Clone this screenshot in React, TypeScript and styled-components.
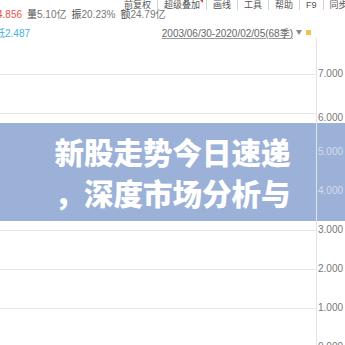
import React from "react";
import styled, { createGlobalStyle } from "styled-components";

const Global = createGlobalStyle`
  html, body { margin: 0; padding: 0; background: #ffffff; }
  body {
    font-family: "Liberation Sans", "Noto Sans CJK SC", sans-serif;
    overflow: hidden;
  }
`;

const Page = styled.div`
  width: 345px;
  height: 345px;
  overflow: hidden;
  position: relative;
  background: #ffffff;
  display: flex;
  flex-direction: column;
`;

const Toolbar = styled.div`
  display: flex;
  align-items: center;
  height: 10px;
  padding-left: 118px;
  white-space: nowrap;
  font-size: 9px;
  color: #555;
  flex-shrink: 0;
`;

const ToolItem = styled.span<{ $mark?: boolean }>`
  position: relative;
  padding: 0 6px;
  line-height: 10px;
  & + & {
    border-left: 1px solid #d4d4d4;
  }
  ${(p) =>
    p.$mark &&
    `
    &::after {
      content: "";
      position: absolute;
      right: 3px;
      top: 0;
      width: 0;
      height: 0;
      border-left: 3px solid transparent;
      border-top: 3px solid #e0443c;
    }
  `}
`;

const InfoRow = styled.div`
  display: flex;
  gap: 5px;
  height: 10px;
  line-height: 10px;
  font-size: 10px;
  margin: 0 0 0 -3px;
  white-space: nowrap;
  color: #777;
  flex-shrink: 0;
`;

const Price = styled.span<{ $color: string }>`
  color: ${(p) => p.$color};
`;

const StatLabel = styled.span`
  color: #4a4a4a;
`;

const SubRow = styled.div`
  display: flex;
  align-items: center;
  height: 12px;
  margin-top: 6px;
  font-size: 10px;
  white-space: nowrap;
  flex-shrink: 0;
`;

const LowPrice = styled.span`
  color: #3fb1df;
  margin-left: -5px;
`;

const DateGroup = styled.div`
  margin-left: auto;
  padding-right: 34px;
  display: flex;
  align-items: center;
  gap: 2px;
`;

const DateText = styled.span`
  color: #666;
  text-decoration: underline;
  text-decoration-color: #999;
`;

const DropArrow = styled.span`
  width: 0;
  height: 0;
  margin-left: 1px;
  border-left: 3px solid transparent;
  border-right: 3px solid transparent;
  border-top: 5px solid #8a8a8a;
`;

const YellowMark = styled.span`
  width: 5px;
  height: 5px;
  margin-left: 2px;
  background: #f3c34a;
`;

const Chart = styled.div`
  position: relative;
  flex: 1;
  display: grid;
  grid-template-columns: 316px 1fr;
`;

const Plot = styled.div`
  padding-top: 36px;
  display: flex;
  flex-direction: column;
`;

const GridLine = styled.div`
  height: 39px;
  flex-shrink: 0;
  box-sizing: border-box;
  border-top: 1px solid #e8e8e8;
`;

const Axis = styled.div`
  border-left: 1px solid #e4e4e4;
  padding-top: 30px;
  display: flex;
  flex-direction: column;
  position: relative;
  z-index: 2;
`;

const AxisLabel = styled.div<{ $covered?: boolean; $drop?: number }>`
  height: 39px;
  flex-shrink: 0;
  box-sizing: border-box;
  line-height: 12px;
  font-size: 10px;
  padding-left: 1px;
  padding-top: ${(p) => p.$drop ?? 0}px;
  color: ${(p) => (p.$covered ? "#d3dbeb" : "#777")};
`;

const Banner = styled.div`
  position: absolute;
  left: 0;
  right: 0;
  top: 85px;
  height: 98px;
  background: rgba(148, 171, 213, 0.93);
  display: flex;
  flex-direction: column;
  align-items: center;
  justify-content: center;
  z-index: 1;
`;

const TitleLine = styled.span`
  display: block;
  font-family: "Noto Sans CJK SC", sans-serif;
  font-weight: 900;
  font-size: 29.5px;
  line-height: 41px;
  color: #ffffff;
  white-space: nowrap;
`;

const tools = ["前复权", "超级叠加", "画线", "工具", "帮助", "F9", "同步"];
const stats = [
  { label: "量", value: "5.10亿" },
  { label: "振", value: "20.23%" },
  { label: "额", value: "24.79亿" },
];
const levels = [
  { v: "7.000", drop: 0 },
  { v: "6.000", drop: 5 },
  { v: "5.000", drop: 0, covered: true },
  { v: "4.000", drop: 0, covered: true },
  { v: "3.000", drop: 0 },
  { v: "2.000", drop: 0 },
  { v: "1.000", drop: 0 },
  { v: "0.000", drop: 0 },
];

export default function App() {
  return (
    <Page>
      <Global />
      <Toolbar>
        {tools.map((t) => (
          <ToolItem key={t} $mark={t === "超级叠加"}>
            {t}
          </ToolItem>
        ))}
      </Toolbar>
      <InfoRow>
        <Price $color="#e2544c">4.856</Price>
        {stats.map((s) => (
          <span key={s.label}>
            <StatLabel>{s.label}</StatLabel>
            {s.value}
          </span>
        ))}
      </InfoRow>
      <SubRow>
        <LowPrice>低2.487</LowPrice>
        <DateGroup>
          <DateText>2003/06/30-2020/02/05(68季)</DateText>
          <DropArrow />
          <YellowMark />
        </DateGroup>
      </SubRow>
      <Chart>
        <Plot>
          {levels.map((l) => (
            <GridLine key={l.v} />
          ))}
        </Plot>
        <Axis>
          {levels.map((l) => (
            <AxisLabel key={l.v} $covered={l.covered} $drop={l.drop}>
              {l.v}
            </AxisLabel>
          ))}
        </Axis>
        <Banner>
          <TitleLine>新股走势今日速递</TitleLine>
          <TitleLine>，深度市场分析与</TitleLine>
        </Banner>
      </Chart>
    </Page>
  );
}
